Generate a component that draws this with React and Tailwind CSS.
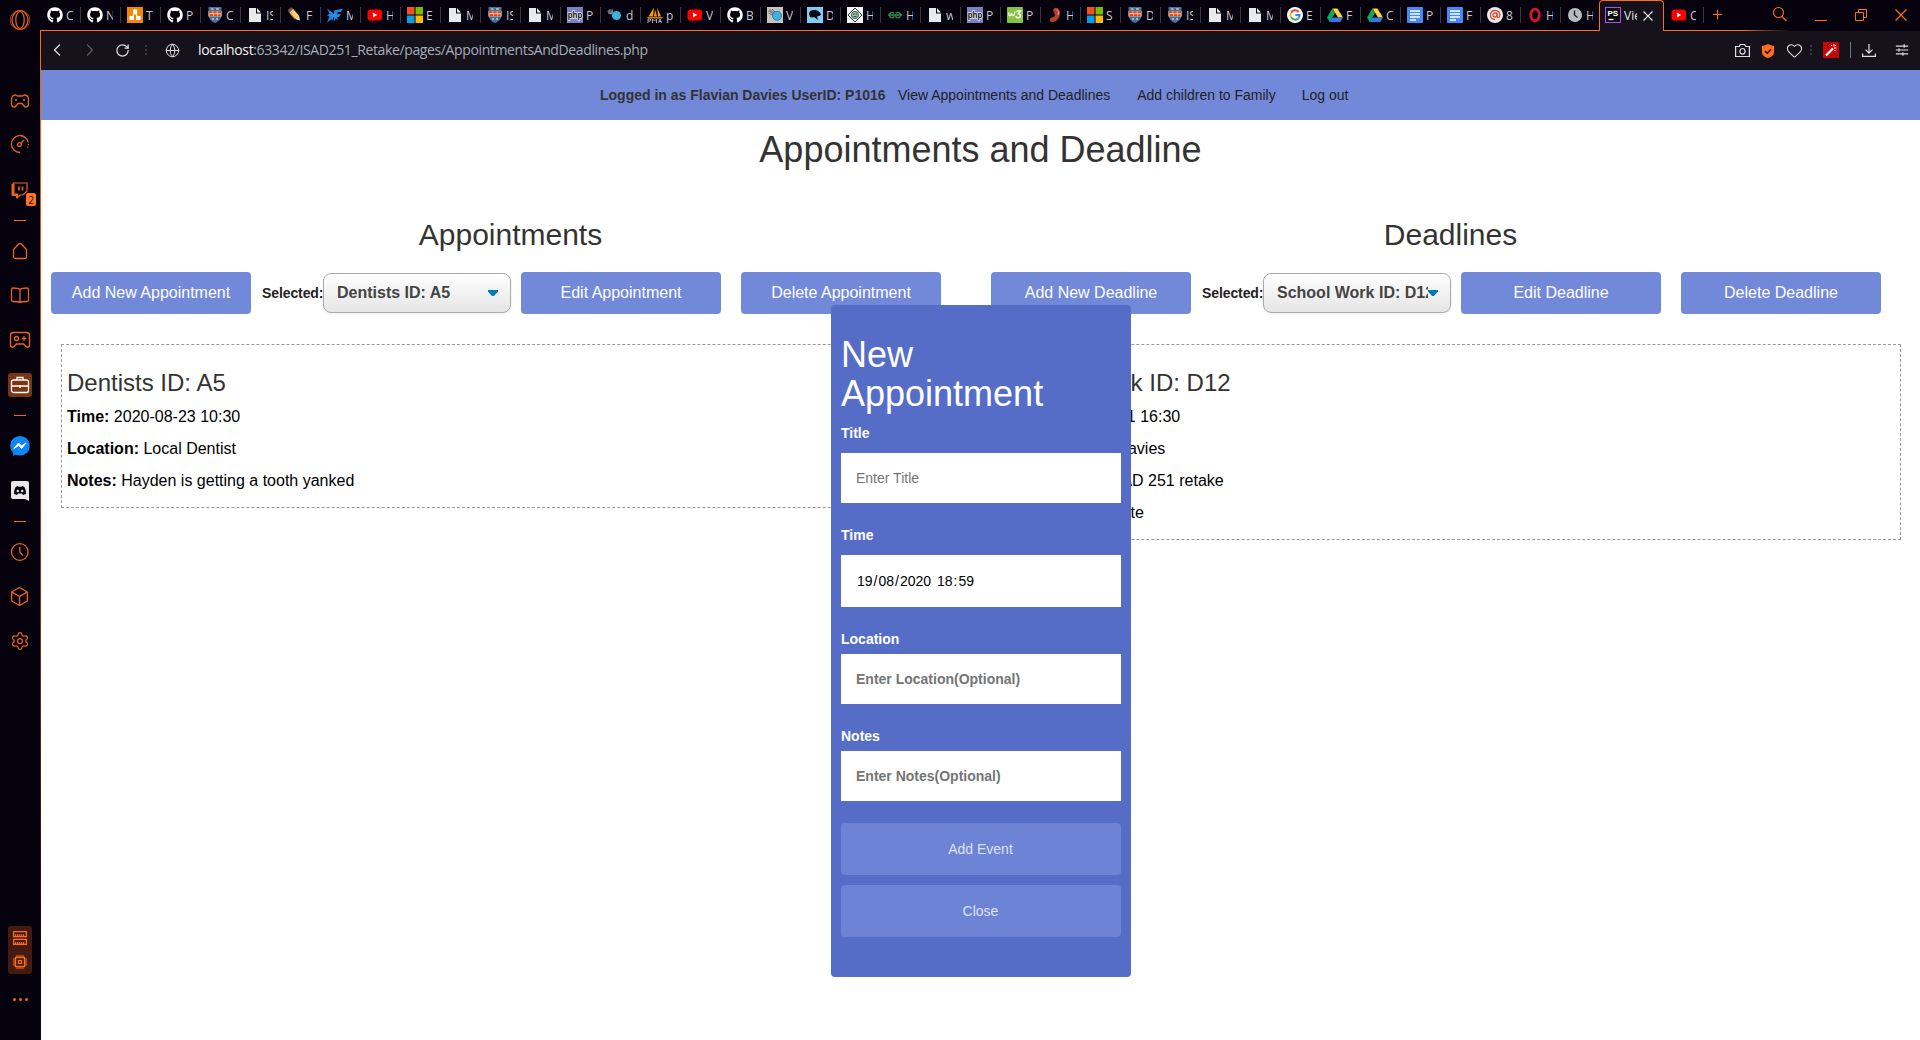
import React from "react";
import {
  ChevronLeft, ChevronRight, RotateCw, Globe, Camera, Heart, Download, X, Plus, Search,
  Box, Settings, Minus,
} from "lucide-react";
import { FaGithub } from "react-icons/fa";

const Svg = ({ children, size = 16, box = "0 0 16 16", className = "" }) => (
  <svg width={size} height={size} viewBox={box} fill="none" className={"shrink-0 " + className}>{children}</svg>
);

const favicons = {
  gh: <FaGithub size={16} className="shrink-0 text-white" />,
  draw: (
    <Svg><rect width="16" height="16" fill="#f08705" /><path d="M8 5 5 11M8 5l3 6" stroke="#fff" strokeWidth="1.2" /><rect x="6" y="2.500" width="4.200" height="4" fill="#fff" /><rect x="2.500" y="9" width="4.500" height="4" fill="#fff" /><rect x="9" y="9" width="4.500" height="4" fill="#fff" /></Svg>
  ),
  shield: (
    <Svg><path d="M1.500 0h13v8c0 4-3 6.500-6.500 8C4.500 14.500 1.500 12 1.500 8z" fill="#3f74aa" /><path d="M1.500 4h13v5.500h-13z" fill="#f0d79a" /><path d="M2 5.200h12M2.500 8.300h11" stroke="#d93a2b" strokeWidth="1.900" strokeDasharray="3.500 .8" /><path d="M4 2h2.500M9 2h3M5 12h2M9 12h2" stroke="#c8c2a0" strokeWidth="1.300" /></Svg>
  ),
  file: <Svg><path d="M2 1h7v5.500h5V15H2z" fill="#e8eaee" /><path d="M10 1l4 4.500h-4z" fill="#e8eaee" /></Svg>,
  pencil: (
    <Svg><g transform="rotate(-42 8 8)"><rect x="5.300" y="-.5" width="5.400" height="3.500" rx="1.200" fill="#8a4b3a" /><rect x="5.300" y="2.500" width="5.400" height="1.500" fill="#d8dadf" /><rect x="5.300" y="4" width="5.400" height="7" fill="#fbd75b" /><path d="M5.300 11h5.400L8 15.500z" fill="#efe2cf" /><path d="M5.500 4v7" stroke="#e07a52" strokeWidth="1" /></g></Svg>
  ),
  mf: <Svg><path d="M0 1.500 6 6V15l-1-3-5 3.500 2.500-6L0 8.500l2.500-2zM7 3.500 16 1.500 14 5H10.500v2H14l-2 3h-2l1.500 3-3-1.500L7 15z" fill="#1f86e0" /><path d="M4 8.500 7.500 6 10 8.500 7.500 11z" fill="#2a93e8" /></Svg>,
  yt: <Svg><rect x=".5" y="2.500" width="14.500" height="11" rx="3" fill="#f00" /><path d="M6 5.500v5l4.200-2.500z" fill="#fff" /></Svg>,
  ms: <Svg><path d="M0 0h7.500v7.500H0z" fill="#f4511e" /><path d="M8.500 0H16v7.500H8.500z" fill="#7cbb00" /><path d="M0 8.500h7.500V16H0z" fill="#00a1f1" /><path d="M8.500 8.500H16V16H8.500z" fill="#ffbb00" /></Svg>,
  php: <Svg><rect width="16" height="16" fill="#7d80bd" /><text x="8" y="10.500" textAnchor="middle" fontSize="9.500" fontWeight="700" fill="#111" stroke="#e9e9f5" strokeWidth="1.600" paintOrder="stroke" textLength="14.500" lengthAdjust="spacingAndGlyphs" fontFamily="Liberation Sans, sans-serif">php</text></Svg>,
  w3: <Svg><rect width="16" height="16" rx="1" fill="#86c440" /><path d="M1.500 5.500c.3 4 2.200 4.300 3 .5.400 3.800 3 3.500 3.300-1.500M9.500 4h4l-2.200 2.700c3 .2 2.800 4-.3 4-1.200 0-2-.5-2.300-1.500" stroke="#fff" strokeWidth="1.400" /></Svg>,
  bug: <Svg><path d="M1.500 3 5 6.500" stroke="#5d7078" strokeWidth="3.500" /><path d="M1 6l5 1M5 2l1 4" stroke="#83949b" strokeWidth="1" /><circle cx="9.500" cy="8.500" r="4.500" fill="#3fb1df" /></Svg>,
  bugGray: <Svg><rect width="16" height="16" fill="#c5c2c2" /><path d="M2 3l5 4" stroke="#8d9497" strokeWidth="3.500" /><path d="M1.500 6 5 8M5 2l3 3" stroke="#59656b" strokeWidth=".8" /><circle cx="10" cy="8.800" r="4.500" fill="#36b6e8" stroke="#315c70" strokeWidth=".7" /></Svg>,
  pma: <Svg><path d="M7 .5 1.500 9.500H6zM8 2.500 7 9.500h3zM10 .5 14 9.500h-3z" fill="#f89c0e" /><path d="M0 10h16l-1 1.500H1z" fill="#d47b18" /><path d="M1 16v-4h2.500v2H1M5.500 16v-4l2 2 2-2v4M11.500 16l1.500-4 1.500 4M12 14.500h2.500" stroke="#a3a1bd" strokeWidth="1" /></Svg>,
  dog: <Svg><rect width="16" height="16" fill="#81cdf0" /><path d="M2 7c0-3 3-4.500 6-4s5 2 6 4.500c-1 2-3 1.500-4 2L11 13l-4-3-2 .5L3 10z" fill="#07090c" /></Svg>,
  diamond: <Svg><rect width="16" height="16" fill="#f2f4f1" /><path d="M8 1l7 7-7 7-7-7z" stroke="#333" /><circle cx="8" cy="8" r="3.600" fill="#9bb9a6" stroke="#356e50" /><path d="M6 7h1.500M8.500 7H10M6.500 9.500h3" stroke="#23523a" /></Svg>,
  gfg: <Svg><path d="M1 8h14M7 6.200a2.700 2.700 0 1 0 0 3.800V8M9 6.200a2.700 2.700 0 1 1 0 3.800V8" stroke="#2f8d46" strokeWidth="1.300" /></Svg>,
  kidney: <Svg><path d="M7 1.500c3-1.500 6.500.5 6 5-.5 5-4 8.500-8 8.500-3 0-2.500-4-.5-4.500 3-.5 4-1.500 3-4-1-2-2-4-.5-5z" fill="#b5412c" /><path d="M9.500 3c1.500 0 2.500 2 1.500 5" stroke="#ea9b85" /></Svg>,
  google: <Svg box="0 0 48 48"><circle cx="24" cy="24" r="24" fill="#fff" /><path d="M35 15A14 14 0 0 0 12 17" stroke="#ea4335" strokeWidth="6" /><path d="M12 17a14 14 0 0 0 0 14" stroke="#fbbc05" strokeWidth="6" /><path d="M12 31a14 14 0 0 0 21 4" stroke="#34a853" strokeWidth="6" /><path d="M33 35a14 14 0 0 0 5-11H25" stroke="#4285f4" strokeWidth="6" /></Svg>,
  drive: <Svg><path d="M5.500 1.500h5L16 10.500h-5z" fill="#ffcf48" /><path d="M5.500 1.500 0 10.500 2.700 15 8 6z" fill="#11a861" /><path d="M5.300 10.500H16L13.300 15H2.700z" fill="#3777e3" /></Svg>,
  docs: <Svg><rect width="16" height="16" rx="1" fill="#4688f4" /><path d="M3 4h10M3 7h10M3 10h10M3 13h6" stroke="#fff" strokeWidth="1.500" /></Svg>,
  at: <Svg><circle cx="8" cy="8" r="8" fill="#ecebea" /><path d="M10 5.500v4c0 1.500 2 1.500 2.500 0 1-4-1-6-4.500-6C5 3.500 3.500 5.500 3.500 8S5 12.500 8 12.500" stroke="#d2503f" strokeWidth="1.300" /><circle cx="8" cy="8" r="2" stroke="#d2503f" strokeWidth="1.300" /></Svg>,
  opera: <Svg><ellipse cx="8" cy="8" rx="4.300" ry="5.800" stroke="#d3162b" strokeWidth="2.800" /></Svg>,
  clock: <Svg><circle cx="8" cy="8" r="7" fill="#b9bbc1" /><path d="M7.500 3.500V8l3 2.500" stroke="#26242d" strokeWidth="1.500" /></Svg>,
  ps: <Svg><rect x=".5" y=".5" width="15" height="15" fill="#0b0a0e" stroke="#b24cf0" /><path d="M3.500 12.500h5" stroke="#fff" strokeWidth="1.300" /><text x="2.500" y="9" fontSize="8" fontWeight="700" fill="#fff" fontFamily="Liberation Sans, sans-serif">PS</text></Svg>,
};

const tabs = [
  ["gh", "C"], ["gh", "N"], ["draw", "T"], ["gh", "P"], ["shield", "C"], ["file", "IS"], ["pencil", "Fi"], ["mf", "M"],
  ["yt", "H"], ["ms", "E"], ["file", "M"], ["shield", "IS"], ["file", "M"], ["php", "P"], ["bug", "d"], ["pma", "p"],
  ["yt", "V"], ["gh", "B"], ["bugGray", "V"], ["dog", "D"], ["diamond", "H"], ["gfg", "H"], ["file", "w"], ["php", "P"],
  ["w3", "P"], ["kidney", "H"], ["ms", "S"], ["shield", "D"], ["shield", "IS"], ["file", "M"], ["file", "M"],
  ["google", "E"], ["drive", "Fi"], ["drive", "C"], ["docs", "P"], ["docs", "Fi"], ["at", "8"], ["opera", "H"], ["clock", "H"],
];

function Tab({ icon, text }) {
  return (
    <div className="flex h-[31px] w-[40px] shrink-0 items-start border-b border-[#ff6c1c] pt-[7px]">
      <div className="flex h-4 w-full items-center border-r border-[#3b383f] pl-[6px]">
        {favicons[icon]}
        <span className="ml-[3px] mt-[2px] w-[7px] overflow-hidden whitespace-nowrap text-[12px] leading-4 text-[#c9c8cc]">{text}</span>
      </div>
    </div>
  );
}

function TabStrip() {
  return (
    <div className="flex h-[31px] bg-[#05020d]">
      <div className="w-px shrink-0 border-b border-[#ff6c1c]" />
      {tabs.map(([icon, text], i) => <Tab key={i} icon={icon} text={text} />)}
      <div className="-ml-[2px] flex h-[31px] w-[65px] shrink-0 items-start rounded-t-[4px] border-x border-t border-[#ff6c1c] bg-[#15121b] pl-[5px] pt-[6px]">
        {favicons.ps}
        <span className="ml-[3px] mt-px w-[13px] overflow-hidden whitespace-nowrap text-[12px] leading-4 text-[#e4e3e8]">Vie</span>
        <Svg size={10} box="0 0 10 10" className="ml-[6px] mt-[4px]"><path d="M.5.5l9 9M9.500.5l-9 9" stroke="#e8e8ea" strokeWidth="1.200" /></Svg>
      </div>
      <div className="flex flex-1 flex-col">
        <div className="flex h-[30px] text-[#ff6c1c]">
          <div className="mt-[7px] flex h-4 w-[40px] items-center border-r border-[#3b383f] pl-[7px]">
            {favicons.yt}
            <span className="ml-[3px] mt-[2px] w-[6px] overflow-hidden text-[12px] leading-4 text-[#c9c8cc]">C</span>
          </div>
          <Plus size={15} strokeWidth={1.700} className="ml-[6px] mt-[7px]" />
          <Svg size={16} className="ml-[47px] mt-[6px]"><circle cx="6.500" cy="6.500" r="5" stroke="currentColor" strokeWidth="1.100" /><path d="M10 10.500l4.500 4.500" stroke="currentColor" strokeWidth="1.300" /></Svg>
          <Svg size={12} box="0 0 12 12" className="ml-[27px] mt-[14px]"><path d="M0 6.500h12" stroke="currentColor" /></Svg>
          <Svg size={12} box="0 0 12 12" className="ml-[28px] mt-[9px]"><path d="M.5 3.500h8v8h-8zM3.500 3.500v-3h8v8h-3" stroke="currentColor" /></Svg>
          <Svg size={12} box="0 0 12 12" className="ml-[28px] mt-[9px]"><path d="M.5.5l11 11M11.500.5l-11 11" stroke="currentColor" strokeWidth="1.200" /></Svg>
        </div>
        <div className="h-px w-[130px] bg-linear-to-r from-[#ff6c1c] from-60% to-[#05020d]" />
      </div>
    </div>
  );
}

function AddressBar() {
  return (
    <div className="flex h-[39px] items-center bg-[#15121b] pb-px pl-[6px] text-[#dfdfe2]">
      <ChevronLeft size={20} strokeWidth={1.500} />
      <ChevronRight size={20} strokeWidth={1.500} className="ml-[13px] text-[#5c5a62]" />
      <RotateCw size={15} strokeWidth={2} className="ml-[15px]" />
      <span className="ml-[15px] h-[10px] border-l-2 border-dotted border-[#3d3a44]" />
      <Globe size={15} strokeWidth={1.600} className="ml-[18px]" />
      <span className="ml-[18px] whitespace-nowrap text-[14px] leading-5 tracking-[-0.375px] text-[#a6adba]">
        <span className="text-[#f4f4f6]">localhost</span>:63342/ISAD251_Retake/pages/AppointmentsAndDeadlines.php
      </span>
      <div className="ml-auto flex items-center pr-[11px]">
        <Svg size={15} box="0 0 15 15"><path d="M.6 3.500h3.700l1-2h4.400l1 2h3.700v10H.6z" stroke="currentColor" strokeWidth="1.200" /><ellipse cx="7.500" cy="8.300" rx="2.600" ry="2.800" stroke="currentColor" strokeWidth="1.200" /></Svg>
        <Svg size={14} className="ml-[11px] mt-[2px]"><path d="M8 0c2 1.500 5 2 7 2v7c0 4-4 6-7 7-3-1-7-3-7-7V2c2 0 5-.5 7-2z" fill="#ff6c1c" /><path d="M4.500 8l2.500 2.500L11.500 6" stroke="#15121b" strokeWidth="1.800" /></Svg>
        <Heart size={17} strokeWidth={1.500} className="ml-[11px]" />
        <span className="ml-[7px] h-[10px] border-l-2 border-dotted border-[#3d3a44]" />
        <Svg className="ml-[11px]"><rect width="16" height="16" fill="#c40808" /><path d="M3 13.500 10 6.500" stroke="#fff" strokeWidth="2.200" /><path d="M11 2v2.500M13.500 6H11M8 3l1 1M13 3l-1 1M12.500 9l-1-1" stroke="#fff" /></Svg>
        <span className="ml-[11px] h-4 w-px bg-[#77757b]" />
        <Svg size={14} box="0 0 14 14" className="ml-[11px]"><path d="M7 1v9M3.500 6.700 7 10.200l3.500-3.500M.6 10.500v2.900h12.800v-2.900" stroke="currentColor" strokeWidth="1.200" /></Svg>
        <Svg size={14} className="ml-[19px]"><path d="M1 3.500h14M1 8h14M1 12.500h14M10.500 1.500v4M4.500 6v4M9 10.500v4" stroke="#dfdfe2" strokeWidth="1.300" /></Svg>
      </div>
    </div>
  );
}

const Divider = ({ className }) => <span className={"h-px w-[12px] shrink-0 bg-[#f0641c] " + className} />;

function Sidebar() {
  return (
    <aside className="flex h-full w-[40px] shrink-0 flex-col items-center bg-[#05020d] text-[#ec6320]">
      <Svg size={22} box="0 0 22 22" className="mt-[9px]"><ellipse cx="11" cy="11" rx="8" ry="9.500" stroke="currentColor" strokeWidth="1.200" /><ellipse cx="11" cy="11" rx="4.200" ry="8.500" stroke="currentColor" strokeWidth="1.200" /><ellipse cx="11" cy="11" rx="9.800" ry="9.500" stroke="currentColor" strokeWidth=".7" /></Svg>
      <Svg size={20} box="0 0 20 20" className="mt-[60px]"><path d="M5 4C2.500 4 1.500 7 1.500 9.500c0 1 .5 1.500 0 3-.5 3 3 4.500 4.500 2.500 1-1.500 1.500-2.500 2.500-2.500h3c1 0 1.500 1 2.500 2.500 1.500 2 5 .5 4.500-2.500-.5-1.500 0-2 0-3C18.500 7 17.500 4 15 4c-1.500 0-1.500 1-3 1H8C6.500 5 6.500 4 5 4z" stroke="currentColor" strokeWidth="1.300" /><circle cx="6" cy="9" r="1" fill="currentColor" /><circle cx="14" cy="9" r="1" fill="currentColor" /></Svg>
      <Svg size={20} box="0 0 20 20" className="mt-[23px]"><path d="M10 18.500A8.500 8.500 0 1 1 18.300 8.500" stroke="currentColor" strokeWidth="1.300" /><path d="M18.500 10a8.500 8.500 0 0 1-1.500 4" stroke="currentColor" strokeWidth="1.300" strokeDasharray="1.200 1.500" /><circle cx="9.500" cy="10.500" r="1.900" stroke="currentColor" strokeWidth="1.300" /><path d="M11 9l3-3" stroke="currentColor" strokeWidth="1.300" /></Svg>
      <div className="relative mt-[27px] h-[18px] w-[18px]">
        <Svg size={18} box="0 0 18 18"><path d="M2.500 2H16v8l-4 4H9l-2.500 2.500V14H2.500z" stroke="currentColor" strokeWidth="1.200" /><path d="M1 3h2v10h4l-1 1v3L5.500 17v-2.500H1z" fill="currentColor" stroke="currentColor" /><path d="M8 5.500v4M11.500 5.500v4" stroke="currentColor" strokeWidth="1.600" /></Svg>
        <span className="absolute left-[15px] top-[12px] flex h-[13px] w-[10px] items-center justify-center rounded-[2px] bg-[#ff7424] text-[10px] leading-none text-[#1b0b05]">2</span>
      </div>
      <Divider className="mt-[21px]" />
      <Svg size={18} box="0 0 18 18" className="mt-[21px]"><path d="M2.500 7.500 7.500 2.200Q9 .8 10.500 2.200L15.500 7.500v7a2 2 0 0 1-2 2h-9a2 2 0 0 1-2-2z" stroke="currentColor" strokeWidth="1.300" strokeLinejoin="round" /></Svg>
      <Svg size={20} box="0 0 20 20" className="mt-[25px]"><path d="M10 4.500C8.500 3 6 3 3 3c-1 0-1.500.5-1.500 1.500V15c0 1 .5 1.500 1.500 1.500 3 0 5.500 0 7 1 1.500-1 4-1 7-1 1 0 1.500-.5 1.500-1.500V4.500C18.500 3.500 18 3 17 3c-3 0-5.500 0-7 1.500zV17" stroke="currentColor" strokeWidth="1.300" /></Svg>
      <Svg size={22} box="0 0 22 22" className="mt-[24px]"><path d="M4.500 3.500h13c2 0 3 1 3 3v9.500c0 2-2 3-3.500 1.500L14.500 15h-7L5 17.500C3.500 19 1.500 18 1.500 16V6.500c0-2 1-3 3-3z" stroke="currentColor" strokeWidth="1.400" /><circle cx="7.500" cy="9.500" r="2" stroke="currentColor" strokeWidth="1.300" /><path d="M15 7.300v4.400M12.800 9.500h4.400" stroke="currentColor" strokeWidth="1.300" /></Svg>
      <div className="mt-[22px] flex h-6 w-6 shrink-0 items-center justify-center rounded-[3px] bg-[#7c3417]">
        <Svg size={20} box="0 0 20 20"><rect x="1.500" y="5" width="17" height="12.500" rx="2" stroke="#fff" strokeWidth="1.300" /><path d="M7 5V2.500h6V5M1.500 11h17M10 10v3" stroke="#fff" strokeWidth="1.300" /></Svg>
      </div>
      <Divider className="mt-[18px]" />
      <Svg size={20} box="0 0 20 20" className="mt-[20px]"><circle cx="10" cy="9.800" r="9.800" fill="#0f86f5" /><path d="M3 15v5l4-2z" fill="#0f7cf5" /><path d="M4 12.500 8.500 7l3 3L16 7l-4.500 5.500-3-3z" fill="#fff" stroke="#fff" /></Svg>
      <Svg size={20} box="0 0 20 20" className="mt-[25px]"><path d="M3 0h14a2 2 0 0 1 2 2v18l-4-2H3a2 2 0 0 1-2-2V2a2 2 0 0 1 2-2z" fill="#e8e8ea" /><path d="M4 13c0-4 1-7 2.500-7.500L8 5l.5.800h3L12 5l1.500.5C15 6 16 9 16 13l-3 1-1-1.500H8L7 14z" fill="#0a0711" /><circle cx="7.800" cy="10" r="1.200" fill="#e8e8ea" /><circle cx="12.200" cy="10" r="1.200" fill="#e8e8ea" /></Svg>
      <Divider className="mt-[20px]" />
      <Svg size={20} box="0 0 20 20" className="mt-[20px]"><circle cx="9.800" cy="10" r="8.300" stroke="currentColor" strokeWidth="1.300" /><path d="M9.800 5v5l3 3.500" stroke="currentColor" strokeWidth="1.300" /></Svg>
      <Box size={21} strokeWidth={1.500} className="-ml-px mt-[24px] shrink-0" />
      <Settings size={20} strokeWidth={1.500} className="-ml-px mt-[24px] shrink-0" />
      <div className="mt-[275px] flex h-12 w-6 shrink-0 flex-col items-center rounded-[3px] bg-[#431b10] pt-[5px] text-[#ff6c1c]">
        <Svg size={14} box="0 0 14 14"><path d="M.6.600h12.800v5H.6zM.6 8.400h12.800v5H.6z" stroke="currentColor" strokeWidth="1.200" /><path d="M2 4.300h10M2 12.100h10" stroke="currentColor" strokeWidth="2" strokeDasharray="1.200 .8" /></Svg>
        <Svg size={14} box="0 0 14 14" className="mt-[10px]"><rect x="2.500" y="2.500" width="9" height="9" stroke="currentColor" strokeWidth="1.300" /><rect x="5.500" y="5.500" width="3" height="3" stroke="currentColor" strokeWidth="1.200" /><path d="M4 0v2M6 0v2M8 0v2M10 0v2M4 12v2M6 12v2M8 12v2M10 12v2M0 4h2M0 6h2M0 8h2M0 10h2M12 4h2M12 6h2M12 8h2M12 10h2" stroke="currentColor" /></Svg>
      </div>
      <div className="mt-[24px] flex gap-[3px]">
        <i className="h-[3px] w-[3px] rounded-full bg-[#f0641c]" /><i className="h-[3px] w-[3px] rounded-full bg-[#f0641c]" /><i className="h-[3px] w-[3px] rounded-full bg-[#f0641c]" />
      </div>
    </aside>
  );
}

const Button = ({ children, className = "" }) => (
  <button className={"h-[42px] w-[200px] shrink-0 rounded-[4px] bg-[#7289da] pb-px text-[16px] text-white " + className}>{children}</button>
);

function Column({ title, noun, selected, card }) {
  return (
    <section className="w-[940px] shrink-0">
      <h2 className="-mt-px pr-px text-center text-[30px] leading-[33px] text-[#333]">{title}</h2>
      <div className="mt-[21px] flex h-[42px] items-center pl-[10px]">
        <Button>Add New {noun}</Button>
        <span className="ml-[11px] w-[61px] whitespace-nowrap pt-px text-[14px] font-bold tracking-[-0.1px] text-[#222]">Selected:</span>
        <div className="flex h-[40px] w-[188px] items-center rounded-[8px] border border-[#aaa] bg-linear-to-b from-white to-[#e5e5e5] pl-[13px] shadow-[0_1px_0_1px_rgba(0,0,0,0.04)]">
          <span className="w-[151px] overflow-hidden whitespace-nowrap text-[16px] font-bold leading-5 text-[#444]">{selected}</span>
          <svg width="10" height="6" viewBox="0 0 10 6" className="shrink-0"><path d="M0 0h10v1.500L6 6H4L0 1.500z" fill="#007cb2" /></svg>
        </div>
        <Button className="ml-[10px]">Edit {noun}</Button>
        <Button className="ml-[20px]">Delete {noun}</Button>
      </div>
      <article className="ml-[20px] mt-[30px] w-[900px] border border-dashed border-[#999] px-[5px] pb-[10px] pt-[24px] text-[16px] text-black">
        <h3 className="mb-[5px] text-[24px] leading-[27px] text-[#333]">{selected}</h3>
        {card.map(([name, value]) => (
          <p key={name} className="h-[32px] whitespace-nowrap pt-[5px] leading-[22px]"><b>{name}:</b> {value}</p>
        ))}
      </article>
    </section>
  );
}

function Field({ label, children, className }) {
  return (
    <label className="block">
      <span className="block text-[14px] font-bold leading-5 text-white">{label}</span>
      <span className={"flex items-center bg-white px-[15px] text-[14px] text-[#757575] " + className}>{children}</span>
    </label>
  );
}

function Modal() {
  return (
    <div className="absolute left-[790px] top-[235px] h-[672px] w-[300px] rounded-[4px] bg-[#566dc8] px-[10px] pt-[30px]">
      <h1 className="text-[36px] leading-[39px] text-white">New Appointment</h1>
      <div className="mt-[10px]"><Field label="Title" className="mt-[10px] h-[50px]">Enter Title</Field></div>
      <div className="mt-[22px]">
        <Field label="Time" className="mt-[10px] h-[52px]">
          <span className="text-black">
            <span className="px-px">19</span>/<span className="px-px">08</span>/<span className="px-px">2020</span>{" "}<span className="px-px">18</span>:<span className="px-px">59</span>
          </span>
        </Field>
      </div>
      <div className="mt-[22px] font-bold"><Field label="Location" className="mt-[5px] h-[50px]">Enter Location(Optional)</Field></div>
      <div className="mt-[22px] font-bold"><Field label="Notes" className="mt-[5px] h-[50px]">Enter Notes(Optional)</Field></div>
      <button className="mt-[22px] block h-[52px] w-full rounded-[4px] bg-[#6c83d6] pr-px text-[14px] text-[#dde2f5]">Add Event</button>
      <button className="mt-[10px] block h-[52px] w-full rounded-[4px] bg-[#6c83d6] pr-px text-[14px] text-[#dde2f5]">Close</button>
    </div>
  );
}

function Page() {
  return (
    <main className="relative flex-1 overflow-hidden bg-white font-['Liberation_Sans',Arial,sans-serif]">
      <nav className="flex h-[50px] items-center whitespace-nowrap bg-[#7289da] pl-[559px] text-[14px] text-[#222]">
        <b className="w-[298px] text-[#333]">Logged in as Flavian Davies UserID: P1016</b>
        <a>View Appointments and Deadlines</a>
        <a className="ml-[27px]">Add children to Family</a>
        <a className="ml-[26px]">Log out</a>
      </nav>
      <h1 className="mt-[10px] text-center text-[36px] leading-[40px] text-[#333]">Appointments and Deadline</h1>
      <div className="mt-[49px] flex">
        <Column title="Appointments" noun="Appointment" selected="Dentists ID: A5" card={[["Time", "2020-08-23 10:30"], ["Location", "Local Dentist"], ["Notes", "Hayden is getting a tooth yanked"]]} />
        <Column title="Deadlines" noun="Deadline" selected="School Work ID: D12" card={[["Time", "2020-08-21 16:30"], ["Name", "Flavian Davies"], ["Notes", "Tasks ISAD 251 retake"], ["Status", "Incomplete"]]} />
      </div>
      <Modal />
    </main>
  );
}

export default function App() {
  return (
    <div className="flex h-[1040px] w-[1920px] overflow-hidden bg-[#05020d] font-['Open_Sans',sans-serif]">
      <Sidebar />
      <div className="flex w-[1880px] flex-col">
        <TabStrip />
        <div className="flex flex-1">
          <div className="w-px bg-linear-to-b from-[#ff6c1c] via-[#8a3d18] via-55% to-[#160a10] to-90%" />
          <div className="flex w-[1879px] flex-col">
            <AddressBar />
            <Page />
          </div>
        </div>
      </div>
    </div>
  );
}
